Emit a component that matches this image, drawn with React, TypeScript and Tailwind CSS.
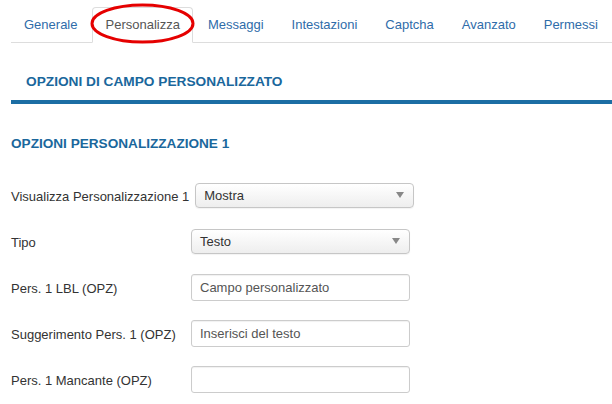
import React from "react";

const tabs = ["Generale", "Personalizza", "Messaggi", "Intestazioni", "Captcha", "Avanzato", "Permessi"];

function SelectBox({ value }: { value: string }) {
  return (
    <div className="flex items-center justify-between w-[219px] h-[25px] pl-[8px] pr-[9px] border border-[#c6c6c6] rounded-[4px] bg-gradient-to-b from-white to-[#eeeeee] text-[#333] shadow-[0_1px_1px_rgba(0,0,0,0.05)]">
      <span className="pt-[1px]">{value}</span>
      <span className="w-0 h-0 border-l-[4px] border-r-[4px] border-t-[6px] border-l-transparent border-r-transparent border-t-[#888]"></span>
    </div>
  );
}

function TextBox({ value }: { value: string }) {
  return (
    <div className="flex items-center w-[219px] h-[27px] pl-[8px] pt-[1px] border border-[#cccccc] rounded-[3px] bg-white text-[#555] shadow-[inset_0_1px_1px_rgba(0,0,0,0.06)]">
      {value}
    </div>
  );
}

export default function App() {
  const rows: { label: string; control: React.ReactNode }[] = [
    { label: "Visualizza Personalizzazione 1", control: <SelectBox value="Mostra" /> },
    { label: "Tipo", control: <SelectBox value="Testo" /> },
    { label: "Pers. 1 LBL (OPZ)", control: <TextBox value="Campo personalizzato" /> },
    { label: "Suggerimento Pers. 1 (OPZ)", control: <TextBox value="Inserisci del testo" /> },
    { label: "Pers. 1 Mancante (OPZ)", control: <TextBox value="" /> },
  ];

  return (
    <div className="w-[612px] h-[404px] overflow-hidden bg-white text-[13px] text-[#333] font-['Liberation_Sans',Arial,sans-serif]">
      {/* tabs */}
      <div className="pt-[7px] pl-[11px]">
        <ul className="flex border-b border-[#dddddd]">
          {tabs.map((t) => {
            const active = t === "Personalizza";
            return (
              <li key={t} className="relative -mb-px mr-[2px]">
                <span
                  className={
                    active
                      ? "block px-[12px] py-[8px] leading-[18px] border border-[#dddddd] border-b-white rounded-t-[4px] bg-white text-[#555]"
                      : "block px-[12px] py-[8px] leading-[18px] border border-transparent rounded-t-[4px] text-[#2f6ca9]"
                  }
                >
                  {t}
                </span>
                {active && (
                  <svg className="absolute left-[-2px] top-[-4px] w-[105px] h-[41px]" viewBox="0 0 105 41">
                    <ellipse cx="52.5" cy="20.5" rx="50.5" ry="18.5" fill="none" stroke="#e50000" strokeWidth="3" />
                  </svg>
                )}
              </li>
            );
          })}
        </ul>
      </div>

      {/* section header */}
      <div className="ml-[11px] mt-[30px] border-b-[4px] border-[#1c6ea4]">
        <h2 className="px-[15px] pb-[9px] text-[13.7px] leading-[18px] font-bold text-[#1a679c]">OPZIONI DI CAMPO PERSONALIZZATO</h2>
      </div>

      <div className="px-[11px]">
        <h3 className="mt-[31px] text-[13.6px] leading-[18px] font-bold text-[#1a679c]">OPZIONI PERSONALIZZAZIONE 1</h3>

        <div className="mt-[19px]">
          {rows.map((r) => (
            <div key={r.label} className="flex items-center h-[46px]">
              <label className="min-w-[180px] pr-[6px] pt-[3px] whitespace-nowrap">{r.label}</label>
              {r.control}
            </div>
          ))}
        </div>
      </div>
    </div>
  );
}
